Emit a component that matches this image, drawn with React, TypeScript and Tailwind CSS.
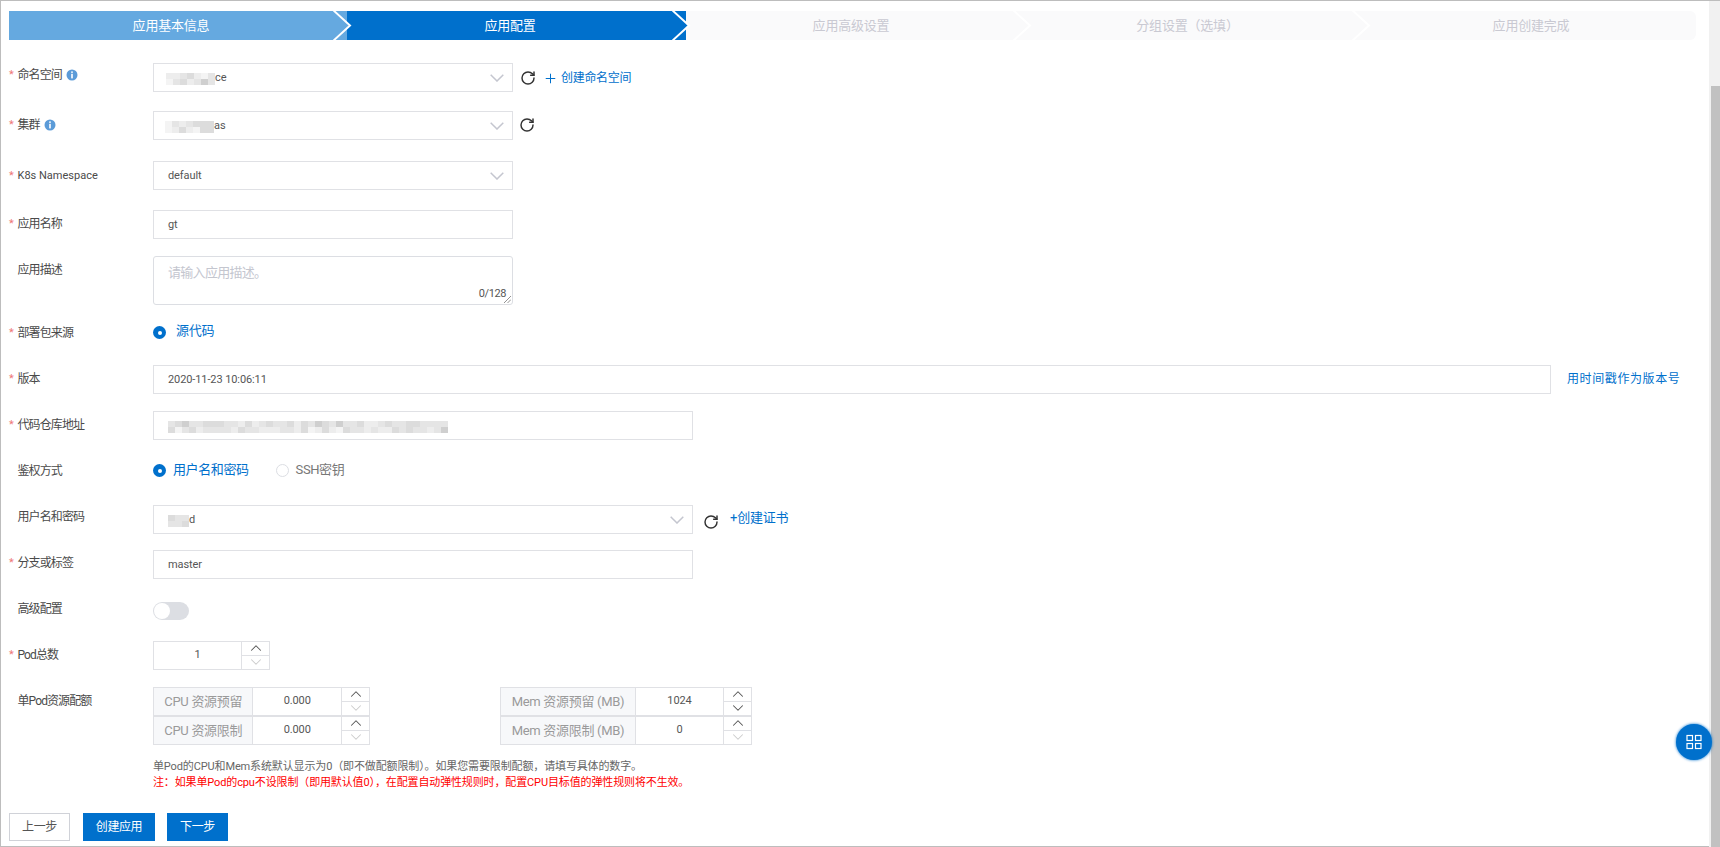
import { ChevronDown, ChevronUp, Plus, RotateCw } from "lucide-react";
import type { ReactNode } from "react";

const steps = [
  { title: "应用基本信息", box: "w-[338px] bg-[#65a9e0] text-white pr-[14px]", arrow: "#65a9e0" },
  { title: "应用配置", box: "w-[339px] bg-[#0070cc] text-white pr-[13px]", arrow: "#0070cc" },
  { title: "应用高级设置", box: "w-[341px] bg-[#fafafb] text-[#c9c9d2] pr-[11px]", arrow: "#fafafb" },
  { title: "分组设置（选填）", box: "w-[339px] bg-[#fafafb] text-[#c9c9d2] pr-[18px]", arrow: "#fafafb" },
  { title: "应用创建完成", box: "w-[330px] bg-[#fafafb] text-[#c9c9d2] rounded-r-md", arrow: "" },
];

// pixelated bits that hide names in the screenshot
const shade: Record<string, string> = {
  a: "bg-[#f4f4f4]",
  b: "bg-[#ededed]",
  c: "bg-[#e5e5e5]",
  d: "bg-[#dcdcdc]",
  e: "bg-[#cfcfcf]",
  f: "bg-[#ffffff]",
};

const Mosaic = ({ rows }: { rows: string[] }) => (
  <div className="flex flex-col">
    {rows.map((row, i) => (
      <div key={i} className="flex">
        {row.split("").map((c, j) => (
          <div key={j} className={`h-[6px] w-[7px] ${shade[c]}`} />
        ))}
      </div>
    ))}
  </div>
);

const Info = () => (
  <svg width="12" height="12" viewBox="0 0 12 12" className="ml-[4px] shrink-0">
    <circle cx="6" cy="6" r="5.5" fill="#5b9bd8" />
    <rect x="5.2" y="2.4" width="1.6" height="1.5" fill="#fff" />
    <rect x="5.2" y="4.8" width="1.6" height="4.6" fill="#fff" />
  </svg>
);

const Label = ({ text, star, info, pad, latin }: { text: string; star?: boolean; info?: boolean; pad: string; latin?: boolean }) => (
  <div className={`flex h-[16px] w-[144px] shrink-0 items-center leading-[16px] text-[#4a4a4a] ${latin ? "text-[11px]" : "text-[12px] tracking-[-0.9px]"} ${pad}`}>
    <span className="w-[8.5px] shrink-0 text-[11px] text-[#ee7777]">{star ? "*" : ""}</span>
    <span>{text}</span>
    {info && <Info />}
  </div>
);

const Row = ({ h, children, ...label }: { h: string; children?: ReactNode; text: string; star?: boolean; info?: boolean; pad: string; latin?: boolean }) => (
  <div className={`flex ${h}`}>
    <Label {...label} />
    {children}
  </div>
);

const Field = ({ w, children, arrow }: { w: string; children?: ReactNode; arrow?: boolean }) => (
  <div className={`flex h-[29px] items-center justify-between border border-[#e0e1e5] bg-white pl-[14px] pr-[8px] pt-[2px] text-[11px] tracking-[-0.1px] text-[#555] ${w}`}>
    {children}
    {arrow && (
      <svg width="14" height="8" viewBox="0 0 14 8" className="-mt-[1px]">
        <polyline points="0.7,0.7 7,7 13.3,0.7" fill="none" stroke="#c4c6cf" strokeWidth="1.5" />
      </svg>
    )}
  </div>
);

const Refresh = ({ cls }: { cls: string }) => <RotateCw size={16} strokeWidth={2.2} className={`text-[#333] ${cls}`} />;

const Radio = ({ on, cls }: { on?: boolean; cls?: string }) =>
  on ? (
    <span className={`flex h-[13px] w-[13px] items-center justify-center rounded-full bg-[#0070cc] ${cls ?? ""}`}>
      <span className="h-[4px] w-[4px] rounded-full bg-white" />
    </span>
  ) : (
    <span className={`h-[13px] w-[13px] rounded-full border border-[#dcdee3] ${cls ?? ""}`} />
  );

const Spin = ({ w, up, down }: { w: string; up?: boolean; down?: boolean }) => (
  <div className={`flex shrink-0 flex-col border-l border-[#e0e1e5] ${w}`}>
    <div className={`flex h-1/2 items-center justify-center border-b border-[#e0e1e5] ${up ? "text-[#555]" : "text-[#ccc]"}`}>
      <ChevronUp size={18} strokeWidth={1.4} />
    </div>
    <div className={`flex h-1/2 items-center justify-center ${down ? "text-[#555]" : "text-[#ccc]"}`}>
      <ChevronDown size={18} strokeWidth={1.4} />
    </div>
  </div>
);

const Quota = ({ addon, label, value, input, up, down }: { addon: string; label: string; value: string; input: string; up?: boolean; down?: boolean }) => (
  <div className="flex h-[29px] border border-[#e0e1e5]">
    <div className={`flex items-center justify-center border-r border-[#e0e1e5] bg-[#f7f8fa] text-[13px] tracking-[-0.3px] text-[#9a9a9a] ${addon}`}>{label}</div>
    <div className={`flex items-center justify-center text-[11px] tracking-[-0.1px] text-[#555] ${input}`}>{value}</div>
    <Spin w="w-[28px]" up={up} down={down} />
  </div>
);

export default function App() {
  return (
    <div className="relative flex h-[847px] w-[1720px] overflow-hidden bg-white font-['Roboto','Noto_Sans_CJK_SC',sans-serif]">
      <div className="flex-1 border-b border-l border-t border-[#bdbdbd] pl-[8px] pt-[10px]">
        <div className="flex h-[29px]">
          {steps.map((s) => (
            <div key={s.title} className={`relative flex shrink-0 items-center justify-center text-[13px] tracking-[-0.2px] ${s.box}`}>
              {s.title}
              {s.arrow && (
                <svg width="20" height="29" viewBox="0 0 20 29" className="absolute right-[-6px] top-0 z-10">
                  <polygon points="0,0 16,14.5 0,29" fill={s.arrow} />
                  <polyline points="0,-1 17,14.5 0,30" fill="none" stroke="#fff" strokeWidth="2" />
                </svg>
              )}
            </div>
          ))}
        </div>

        <div className="mt-[23px] flex flex-col">
          <Row h="h-[48px]" text="命名空间" star info pad="mt-[4px]">
            <Field w="w-[360px]" arrow>
              <div className="-ml-[2px] flex items-center">
                <Mosaic rows={["bbcdbac", "acdbcec"]} />
                <span>ce</span>
              </div>
            </Field>
            <Refresh cls="ml-[7px] mt-[7px]" />
            <Plus size={15} strokeWidth={1.6} className="ml-[7px] mt-[8px] text-[#0070cc]" />
            <span className="ml-[3px] mt-[6px] h-[18px] text-[12px] leading-[18px] tracking-[-0.3px] text-[#0070cc]">创建命名空间</span>
          </Row>
          <Row h="h-[50px]" text="集群" star info pad="mt-[6px]">
            <Field w="w-[360px]" arrow>
              <div className="-ml-[3px] flex items-center">
                <Mosaic rows={["acbcddd", "abdbadd"]} />
                <span>as</span>
              </div>
            </Field>
            <Refresh cls="ml-[6px] mt-[6px]" />
          </Row>
          <Row h="h-[49px]" text="K8s Namespace" star latin pad="mt-[7px]">
            <Field w="w-[360px]" arrow>
              default
            </Field>
          </Row>
          <Row h="h-[46px]" text="应用名称" star pad="mt-[6px]">
            <Field w="w-[360px]">gt</Field>
          </Row>
          <Row h="h-[64px]" text="应用描述" pad="mt-[6px]">
            <div className="relative h-[49px] w-[360px] rounded-[3px] border border-[#dcdee3] px-[14px] pt-[6px] text-[13px] tracking-[-0.7px] text-[#c4c6cf]">
              请输入应用描述。
              <span className="absolute bottom-[2px] right-[6px] text-[11px] tracking-[-0.4px] text-[#555]">0/128</span>
              <svg width="8" height="8" viewBox="0 0 8 8" className="absolute bottom-[1px] right-[1px]">
                <path d="M1 8 8 1M4.5 8 8 4.5" stroke="#777" strokeWidth="0.8" />
              </svg>
            </div>
          </Row>
          <Row h="h-[45px]" text="部署包来源" star pad="mt-[5px]">
            <Radio on cls="mt-[6px]" />
            <span className="ml-[10px] mt-[2px] h-[18px] text-[13px] leading-[18px] tracking-[-0.3px] text-[#0070cc]">源代码</span>
          </Row>
          <Row h="h-[46px]" text="版本" star pad="mt-[6px]">
            <Field w="w-[1398px]">2020-11-23 10:06:11</Field>
            <span className="ml-[16px] mt-[5px] h-[18px] text-[12px] leading-[18px] tracking-[0.6px] text-[#0070cc]">用时间戳作为版本号</span>
          </Row>
          <Row h="h-[47px]" text="代码仓库地址" star pad="mt-[6px]">
            <Field w="w-[540px]">
              <Mosaic rows={["cdeccdddccbdbcdccdbdcedceccdbbcdccddcccc", "dacdbccccbdccbbbccbdabdbadccbcbbdcdccbce"]} />
            </Field>
          </Row>
          <Row h="h-[47px]" text="鉴权方式" pad="mt-[5px]">
            <Radio on cls="mt-[6px]" />
            <span className="ml-[7px] mt-[3px] h-[18px] text-[13px] leading-[18px] tracking-[-0.4px] text-[#0070cc]">用户名和密码</span>
            <Radio cls="ml-[27px] mt-[6px]" />
            <span className="ml-[7px] mt-[3px] h-[18px] text-[13px] leading-[18px] tracking-[-0.4px] text-[#777]">SSH密钥</span>
          </Row>
          <Row h="h-[45px]" text="用户名和密码" pad="mt-[4px]">
            <Field w="w-[540px]" arrow>
              <div className="flex items-center">
                <Mosaic rows={["dcc", "ccd"]} />
                <span>d</span>
              </div>
            </Field>
            <Refresh cls="ml-[10px] mt-[9px]" />
            <span className="ml-[11px] mt-[4px] h-[18px] text-[13px] leading-[18px] tracking-[-0.2px] text-[#0070cc]">+创建证书</span>
          </Row>
          <Row h="h-[45px]" text="分支或标签" star pad="mt-[5px]">
            <Field w="w-[540px]">master</Field>
          </Row>
          <Row h="h-[46px]" text="高级配置" pad="mt-[6px]">
            <div className="mt-[7px] h-[18px] w-[36px] rounded-full bg-[#dcdee3] p-[1px]">
              <div className="h-[16px] w-[16px] rounded-full bg-white" />
            </div>
          </Row>
          <Row h="h-[46px]" text="Pod总数" star pad="mt-[6px]">
            <div className="flex h-[29px] w-[117px] border border-[#e0e1e5] text-[11px] text-[#555]">
              <div className="flex w-[87px] items-center justify-center">1</div>
              <Spin w="w-[28px]" up />
            </div>
          </Row>
          <Row h="h-[72px]" text="单Pod资源配额" pad="mt-[6px]">
            <div className="flex gap-[130px]">
              <div className="flex w-[217px] flex-col">
                <Quota addon="w-[100px]" input="w-[88px]" label="CPU 资源预留" value="0.000" up />
                <Quota addon="w-[100px]" input="w-[88px]" label="CPU 资源限制" value="0.000" up />
              </div>
              <div className="flex w-[252px] flex-col">
                <Quota addon="w-[135px]" input="w-[87px]" label="Mem 资源预留 (MB)" value="1024" up down />
                <Quota addon="w-[135px]" input="w-[87px]" label="Mem 资源限制 (MB)" value="0" up />
              </div>
            </div>
          </Row>
          <div className="pl-[144px] text-[11px] leading-[16px] tracking-[-0.13px]">
            <p className="text-[#666]">单Pod的CPU和Mem系统默认显示为0（即不做配额限制）。如果您需要限制配额，请填写具体的数字。</p>
            <p className="text-[#f00]">注：如果单Pod的cpu不设限制（即用默认值0），在配置自动弹性规则时，配置CPU目标值的弹性规则将不生效。</p>
          </div>
        </div>

        <div className="mt-[22px] flex text-[12px] tracking-[-0.4px]">
          <button className="h-[28px] w-[61px] border border-[#d0d2d8] bg-white text-[#555]">上一步</button>
          <button className="ml-[13px] h-[28px] w-[72px] bg-[#0070cc] text-white">创建应用</button>
          <button className="ml-[12px] h-[28px] w-[61px] bg-[#0070cc] text-white">下一步</button>
        </div>
      </div>

      {/* scrollbar */}
      <div className="w-[11px] border-t border-[#bdbdbd] bg-[#f1f1f1] pl-[2px] pt-[85px]">
        <div className="h-full bg-[#c1c1c1]" />
      </div>

      <div className="absolute left-[1676px] top-[724px] flex h-[36px] w-[36px] items-center justify-center rounded-full bg-[#0070cc] shadow-[0_0_3px_#0070cc]">
        <svg width="16" height="16" viewBox="0 0 16 16" fill="none" stroke="#fff" strokeWidth="1.2">
          <rect x="1" y="1.5" width="5.5" height="5" />
          <rect x="9.5" y="1.5" width="5.5" height="5" />
          <rect x="1" y="9.5" width="5.5" height="5" />
          <rect x="9.5" y="9.5" width="5.5" height="5" />
        </svg>
      </div>
    </div>
  );
}
